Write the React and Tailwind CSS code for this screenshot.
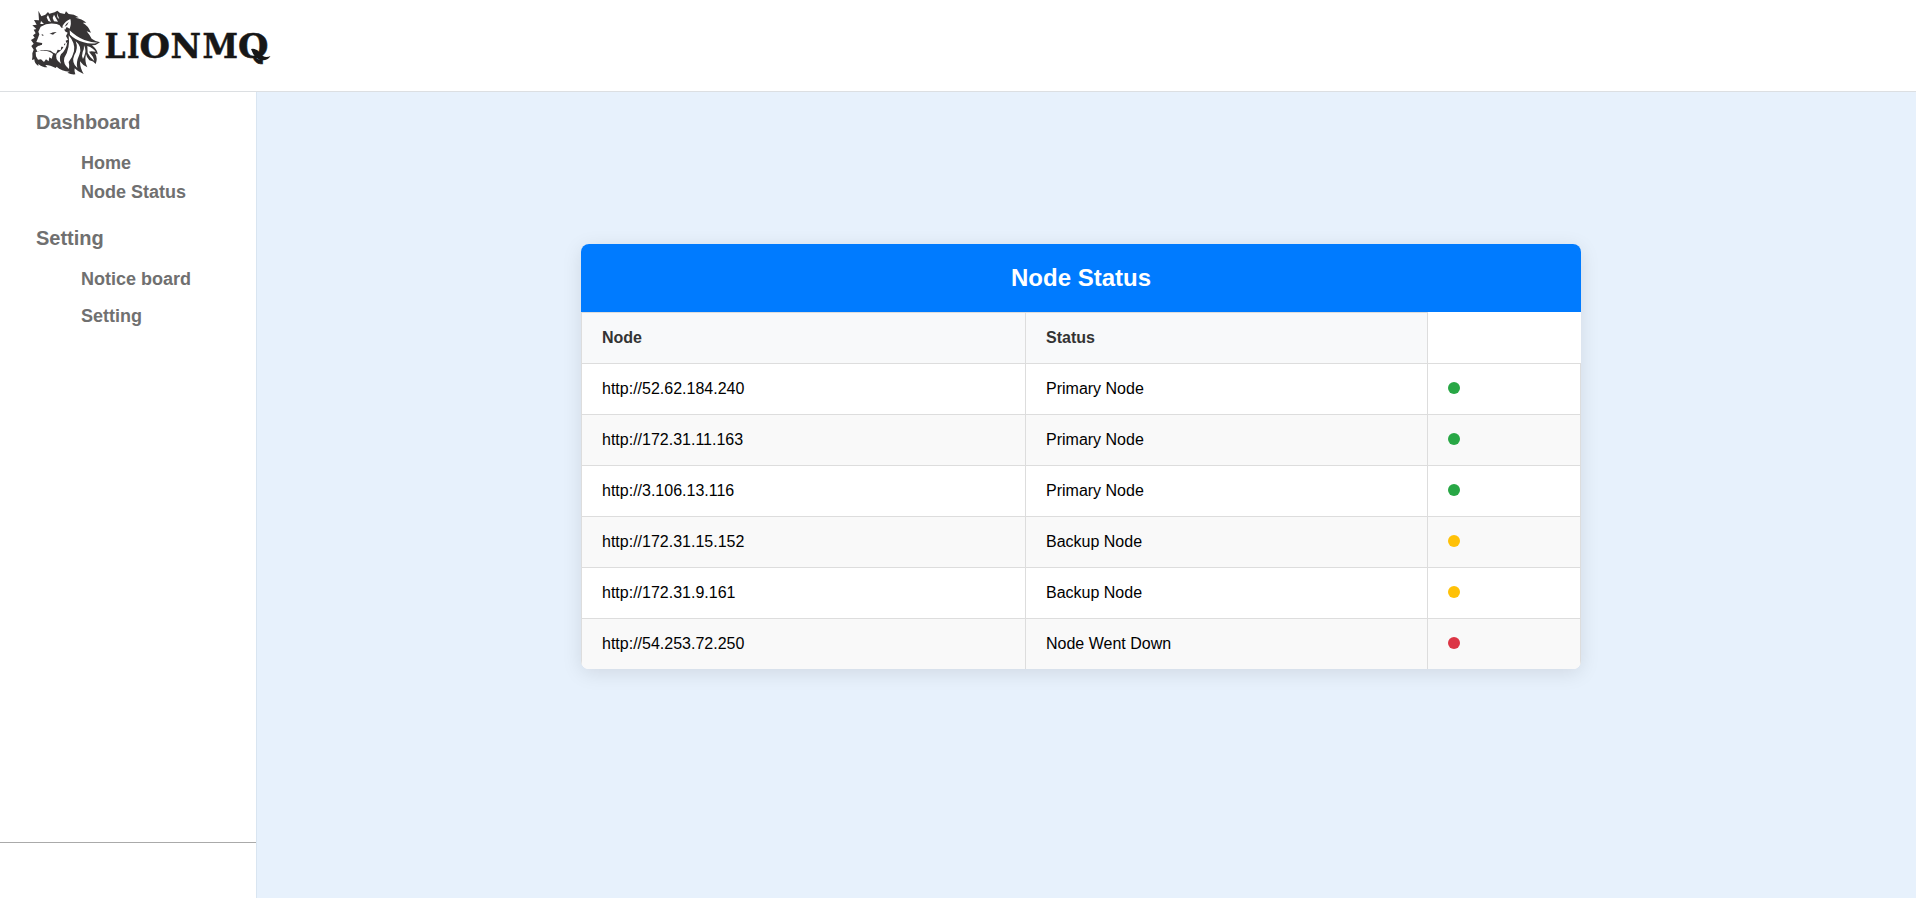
const NODES = [
  { url: "http://52.62.184.240", status: "Primary Node", dot: "bg-[#28a745]" },
  { url: "http://172.31.11.163", status: "Primary Node", dot: "bg-[#28a745]" },
  { url: "http://3.106.13.116", status: "Primary Node", dot: "bg-[#28a745]" },
  { url: "http://172.31.15.152", status: "Backup Node", dot: "bg-[#ffc107]" },
  { url: "http://172.31.9.161", status: "Backup Node", dot: "bg-[#ffc107]" },
  { url: "http://54.253.72.250", status: "Node Went Down", dot: "bg-[#dc3545]" },
];

function Logo() {
  return (
    <svg width="256" height="84" viewBox="0 0 256 84" className="ml-6 shrink-0 overflow-visible" aria-label="LionMQ">
      <g transform="translate(0 4) scale(0.33333)">
        {/* mane silhouette */}
        <path
          fill="#373435"
          d="M43 20 L52 37 L64 32 L72 24 L76 29 L92 25 L100 20 L108 27 L122 30 L126 22 L134 30 Q150 30 164 40 L154 41 Q174 44 187 56 L176 56 Q192 64 201 86 L188 82 Q198 94 203 104 Q214 112 228 115 Q218 124 204 124 Q221 138 221 151 L213 147 Q222 164 215 180 Q209 171 196 169 Q187 158 186 150 Q181 172 190 190 Q176 184 168 172 Q168 192 179 210 Q162 204 152 193 Q150 203 154 211 Q143 213 130 206 L137 203 Q112 201 98 188 L95 192 Q76 182 64 183 L70 190 Q54 190 43 180 L43 186 Q31 178 31 166 L24 168 Q26 158 25 148 L29 137 L22 126 L29 119 L21 108 L32 101 L27 94 L35 88 L29 77 L37 75 L25 64 L38 62 L30 48 L45 49 Z"
        />
        {/* face */}
        <path
          fill="#fff"
          d="M50 68 Q72 54 98 60 L107 64 L112 71 L119 70 L123 82 L131 86 L126 96 L132 107 L125 110 L128 119 L120 119 L121 129 L112 128 L110 139 L101 137 L96 149 L88 146 L80 140 Q64 137 54 138 L40 143 L35 132 L42 126 L54 122 L54 117 L37 114 L42 102 L46 91 L43 83 Z"
        />
        {/* muzzle and chin */}
        <path fill="#fff" d="M35 145 Q47 139 61 140 Q78 141 87 150 L83 164 L76 160 L74 172 L66 166 L60 174 L51 166 L42 167 L36 157 Z" />
        {/* crown tufts */}
        <path fill="#fff" d="M51 51 L60 60 L49 60 Z M72 33 L81 54 L73 51 L68 40 Z M90 32 L102 53 L90 52 L86 42 Z M99 27 L106 46 L100 40 Z" />
        {/* ear */}
        <path fill="#fff" d="M139 45 Q143 58 137 74 L128 69 L123 78 L115 67 Q124 51 139 45 Z" />
        <path fill="#373435" d="M134 54 Q132 63 122 68 Q125 59 134 54 Z" />
        {/* flowing mane strands */}
        <path fill="#fff" d="M137 79 Q157 99 181 108 Q203 116 221 116 Q201 122 179 115 Q154 108 138 92 Z" />
        <path fill="#fff" d="M134 94 Q155 118 150 142 Q146 160 134 174 Q137 184 135 195 Q116 180 121 161 Q139 134 134 94 Z" />
        <path fill="#fff" d="M155 112 Q176 128 166 152 Q155 176 160 192 Q141 176 151 153 Q164 133 155 112 Z" />
        <path fill="#fff" d="M130 114 Q127 137 111 151 Q104 162 111 179 Q91 165 98 149 Q115 139 121 124 Z" />
        <path fill="#fff" d="M180 124 Q188 140 181 156 L177 165 Q172 155 176 144 Q181 135 180 124 Z" />
        <path fill="#fff" d="M190 126 Q208 132 215 143 Q201 140 195 143 L207 159 L211 171 Q197 160 191 147 Z" />
        {/* eye, nose and mouth */}
        <path fill="#373435" d="M76 90 Q87 83 98 84 Q92 88 87 92 Q82 89 76 90 Z M53 90 L60 94 L54 95 Z M34 118 L47 117 L56 119 L47 124 L37 122 Z" />
      </g>
      <text y="57.500" fill="#171717" stroke="#171717" strokeWidth="0.500" className="font-['DejaVu_Serif',serif] text-[34px] font-bold">
        <tspan x="80.500" textLength="21" lengthAdjust="spacingAndGlyphs">L</tspan>
        <tspan x="103" textLength="12.500" lengthAdjust="spacingAndGlyphs">I</tspan>
        <tspan x="115.500" textLength="30.500" lengthAdjust="spacingAndGlyphs">O</tspan>
        <tspan x="146.500" textLength="30.500" lengthAdjust="spacingAndGlyphs">N</tspan>
        <tspan x="178.500" textLength="35.500" lengthAdjust="spacingAndGlyphs">M</tspan>
        <tspan x="214" textLength="30.500" lengthAdjust="spacingAndGlyphs">Q</tspan>
      </text>
      {/* tail swash of the Q */}
      <path fill="#171717" d="M227 49 Q233 48 236 53 Q240 59 246.500 56 Q243 61.500 236 60 Q230 58 227 49 Z" />
    </svg>
  );
}

function Sidebar() {
  return (
    <aside className="flex w-[257px] shrink-0 flex-col border-r border-[#d9e5f1] bg-white font-bold text-[#707070]">
      <nav className="flex h-[751px] shrink-0 flex-col border-b border-[#aaa] pl-9 pt-[18px]">
        <h2 className="text-xl leading-6">Dashboard</h2>
        <ul className="mt-[15px] pl-[45px] text-lg leading-[29px]">
          <li>Home</li>
          <li>Node Status</li>
        </ul>
        <h2 className="mt-[19px] text-xl leading-6">Setting</h2>
        <ul className="mt-[15px] pl-[45px] text-lg leading-[29px]">
          <li>Notice board</li>
          <li className="mt-2">Setting</li>
        </ul>
      </nav>
    </aside>
  );
}

function StatusTable() {
  return (
    <section className="h-[425px] w-[1000px] overflow-hidden rounded-lg bg-white shadow-[0_4px_20px_rgba(0,0,0,0.1)]">
      <h1 className="flex h-[68px] items-center justify-center bg-[#007bff] text-2xl font-bold text-white">Node Status</h1>
      <div className="grid h-[51px] grid-cols-[444px_402px_153px] border-l border-[#ddd] font-bold text-[#333]">
        <div className="flex items-center border-r border-t border-[#ddd] bg-[#f8f9fa] pl-5">Node</div>
        <div className="flex items-center border-r border-t border-[#ddd] bg-[#f8f9fa] pl-5">Status</div>
        <div />
      </div>
      <div>
        {NODES.map((node) => (
          <div
            key={node.url}
            className="grid h-[51px] grid-cols-[444px_402px_153px] border-l border-t border-[#ddd] text-black odd:bg-white even:bg-[#f9f9f9]"
          >
            <div className="flex items-center border-r border-[#ddd] pl-5">{node.url}</div>
            <div className="flex items-center border-r border-[#ddd] pl-5">{node.status}</div>
            <div className="flex items-center border-r border-[#ddd] pb-0.5 pl-5">
              <span className={"size-3 rounded-full " + node.dot} />
            </div>
          </div>
        ))}
      </div>
    </section>
  );
}

export default function App() {
  return (
    <div className="flex h-[898px] w-[1916px] flex-col overflow-hidden bg-white font-['Liberation_Sans',Arial,sans-serif] text-base">
      <header className="flex h-[92px] shrink-0 items-start border-b border-[#dcdfe2] bg-white">
        <Logo />
      </header>
      <div className="flex min-h-0 flex-1">
        <Sidebar />
        <main className="flex flex-1 justify-center bg-[#e7f1fc] pr-[11px] pt-[152px]">
          <StatusTable />
        </main>
      </div>
    </div>
  );
}
